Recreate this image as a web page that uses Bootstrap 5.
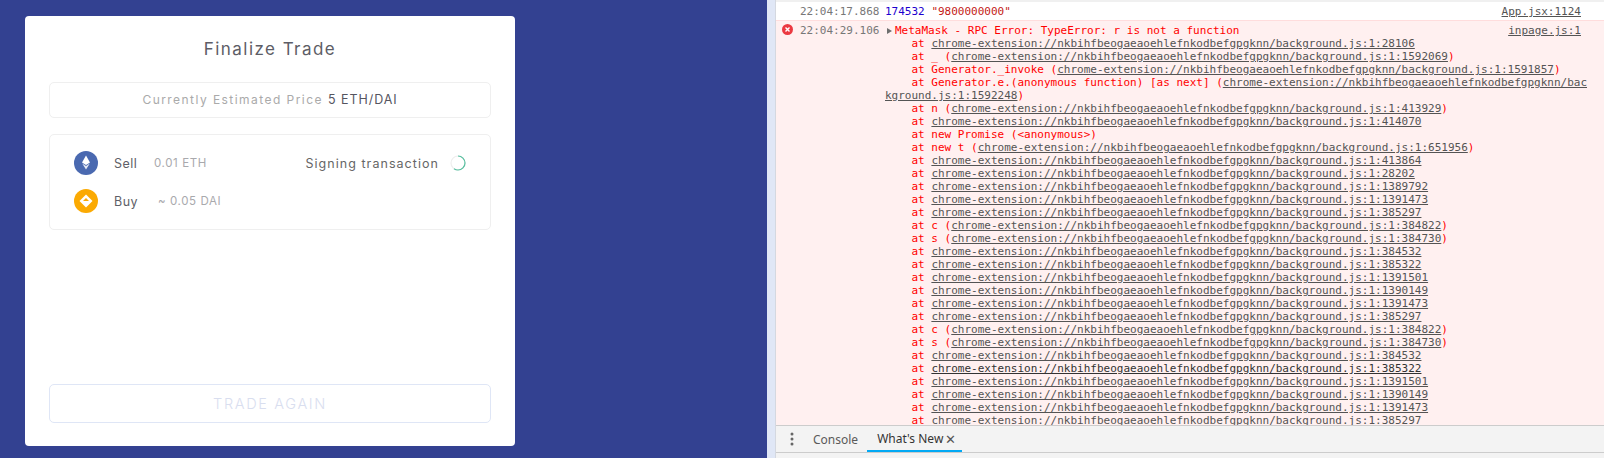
<!DOCTYPE html>
<html lang="en"><head><meta charset="utf-8"><title>Finalize Trade</title>
<link href="https://cdn.jsdelivr.net/npm/bootstrap@5.3.0/dist/css/bootstrap.min.css" rel="stylesheet">
<style>
html,body{height:458px;overflow:hidden;margin:0}
body{font-family:Inter,"Open Sans",sans-serif;background:#334191}
.shell{height:458px}
.dapp{width:767px;padding:16px 0 0 25px;background:#334191}
.trade{width:490px;height:430px;border-radius:4px;padding:0 24px 23px;color:#5b5b66}
.heading{font-size:17px;font-weight:400;letter-spacing:1.45px;line-height:20px;margin:23px 0 23px;text-align:center;color:#5d5d66}
.box{border:1px solid #efefef;border-radius:5px}
.price{height:36px;font-size:12px;letter-spacing:1.45px;margin-bottom:16px}
.price span{color:#aaa}.price b{font-weight:400;color:#55555f;margin-left:5px;font-size:12.5px;letter-spacing:.95px}
.steps{height:96px;padding:16px 24px 0}
.coin{width:24px;height:24px;flex:none}
.rowline{height:24px;margin-bottom:14px;font-size:12.5px;letter-spacing:.5px}
.act{width:40px;margin-left:16px;color:#5f5f68;padding-top:2px}
.amt{font-size:11.5px;color:#a9a9ad;letter-spacing:.6px;padding-top:2px}
.sign{font-size:12.5px;color:#666;letter-spacing:1.05px;padding-top:2px}
.spin{margin-left:11px}
.again{height:39px;font-size:14.5px;font-weight:300;letter-spacing:1.65px;color:#d9deef;border:1px solid #dfe6f6;border-radius:5px;background:#fff}
.strip{width:8px;background:#e0e7f6}
.tools{width:829px;background:#fff;border-left:1px solid #d4d8e0}
.log{flex:1;min-height:0;overflow:hidden;font-family:"DejaVu Sans Mono",monospace;font-size:11px;line-height:13px;color:#333}
.topline{height:2px;background:#f0f0f0}
.entry1{height:19px;padding-top:3px;border-bottom:1px solid #fdd}
.entry2{background:#fff0f0;padding-top:3px;color:#f00}
.stamp{width:109px;padding-left:24px;color:#777;flex:none}
.num{color:#1c00cf}.str{color:#c41a16}
.src{color:#545454;text-decoration:underline;padding-right:23px;margin-left:auto}
.wrap{padding:0 14px 0 109px;margin:0;font:inherit;white-space:pre-wrap;word-break:break-all;overflow:hidden;color:#f00}
.wrap a,.wrap a:hover{color:#545454;text-decoration:underline}
.wrap a.hov,.wrap a.hov:hover{color:#333}
.errx{position:absolute;left:6px;top:3px;width:11px;height:11px}
.tri{display:inline-block;border-left:5px solid #6e6e6e;border-top:3px solid transparent;border-bottom:3px solid transparent;margin:0 3px 0 2px}
.drawer{height:33px;flex:none;background:#f3f3f3;border-top:1px solid #ccc}
.tabbar{height:27px;border-bottom:1px solid #ccc;font-size:12px;font-family:"Noto Sans","Open Sans",sans-serif}
.dots{width:32px}
.tabitem{padding:2px 9px 0 5px;height:26px;color:#5a5a5a;white-space:nowrap}
.tabitem.on{color:#333;border-bottom:2px solid #03a9f4;padding:2px 6px 0 10px;width:95px;justify-content:space-between}
.tabx{color:#555;font-size:13px;line-height:1}
</style></head>
<body>
<div class="shell d-flex">
<div class="dapp">
 <div class="trade bg-white d-flex flex-column">
  <h1 class="heading">Finalize Trade</h1>
  <div class="box price d-flex align-items-center justify-content-center"><span>Currently Estimated Price</span><b>5 ETH/DAI</b></div>
  <div class="box steps">
   <div class="rowline d-flex align-items-center">
    <svg class="coin" viewBox="0 0 24 24"><circle cx="12" cy="12" r="12" fill="#4a69b0"/><path d="M12 4.5l4 7-4 2.4-4-2.4z" fill="#fff"/><path d="M8.2 12.6l3.8 2.3 3.8-2.3-3.8 6z" fill="#fff" opacity=".85"/></svg>
    <span class="act">Sell</span><span class="amt">0.01 ETH</span>
    <span class="sign ms-auto">Signing transaction</span>
    <svg class="spin" width="16" height="16" viewBox="0 0 16 16"><circle cx="8" cy="8" r="7" fill="none" stroke="#eee" stroke-width="1.2"/><path d="M8 1a7 7 0 0 1 0 14a7 7 0 0 1-4-1.3" fill="none" stroke="#56bf9f" stroke-width="1.2"/></svg>
   </div>
   <div class="rowline d-flex align-items-center">
    <svg class="coin" viewBox="0 0 24 24"><circle cx="12" cy="12" r="12" fill="#fbaa03"/><path d="M12 5.5l6.5 6.5-6.5 6.5-6.5-6.5z" fill="#fff"/><path d="M9 12l3-3 3 3z" fill="#fbaa03"/></svg>
    <span class="act">Buy</span><span class="amt ms-1">~ 0.05 DAI</span>
   </div>
  </div>
  <button class="again w-100 mt-auto" disabled>TRADE AGAIN</button>
 </div>
</div>
<div class="strip"></div>
<div class="tools d-flex flex-column">
 <div class="log">
  <div class="topline"></div>
  <div class="entry1 d-flex"><span class="stamp">22:04:17.868</span><span><span class="num">174532</span> <span class="str">"9800000000"</span></span><span class="src">App.jsx:1124</span></div>
  <div class="entry2 position-relative">
   <svg class="errx" viewBox="0 0 11 11"><circle cx="5.5" cy="5.5" r="5.5" fill="#eb3941"/><path d="M3.5 3.5l4 4M7.5 3.5l-4 4" stroke="#fff" stroke-width="1.4"/></svg>
   <div class="d-flex"><span class="stamp">22:04:29.106</span><span><i class="tri"></i>MetaMask - RPC Error: TypeError: r is not a function</span><span class="src">inpage.js:1</span></div>
<pre class="wrap" id="stack"></pre>
  </div>
 </div>
 <div class="drawer">
  <div class="tabbar d-flex align-items-center">
   <div class="dots d-flex justify-content-center"><svg width="4" height="14" viewBox="0 0 4 14"><circle cx="2" cy="2" r="1.5" fill="#666"/><circle cx="2" cy="7" r="1.5" fill="#666"/><circle cx="2" cy="12" r="1.5" fill="#666"/></svg></div>
   <div class="tabitem d-flex align-items-center">Console</div>
   <div class="tabitem on d-flex align-items-center">What's New <span class="tabx">✕</span></div>
  </div>
 </div>
</div>
</div>
<script>
var base='chrome-extension://nkbihfbeogaeaoehlefnkodbefgpgknn/background.js:1:';
var L=[['',28106],['_',1592069],['Generator._invoke',1591857],['Generator.e.(anonymous function) [as next]',1592248],['n',413929],['',414070],['P'],['new t',651956],['',413864],['',28202],['',1389792],['',1391473],['',385297],['c',384822],['s',384730],['',384532],['',385322],['',1391501],['',1390149],['',1391473],['',385297],['c',384822],['s',384730],['',384532],['',385322,1],['',1391501],['',1390149],['',1391473],['',385297]];
var h='';
L.forEach(function(r){
 h+='    at ';
 if(r[0]==='P'){h+='new Promise (&lt;anonymous&gt;)\n';return;}
 var a='<a class="'+(r[2]?'hov':'')+'">'+base+r[1]+'</a>';
 h+=r[0]?r[0]+' ('+a+')\n':a+'\n';
});
document.getElementById('stack').innerHTML=h;
</script>
</body></html>
